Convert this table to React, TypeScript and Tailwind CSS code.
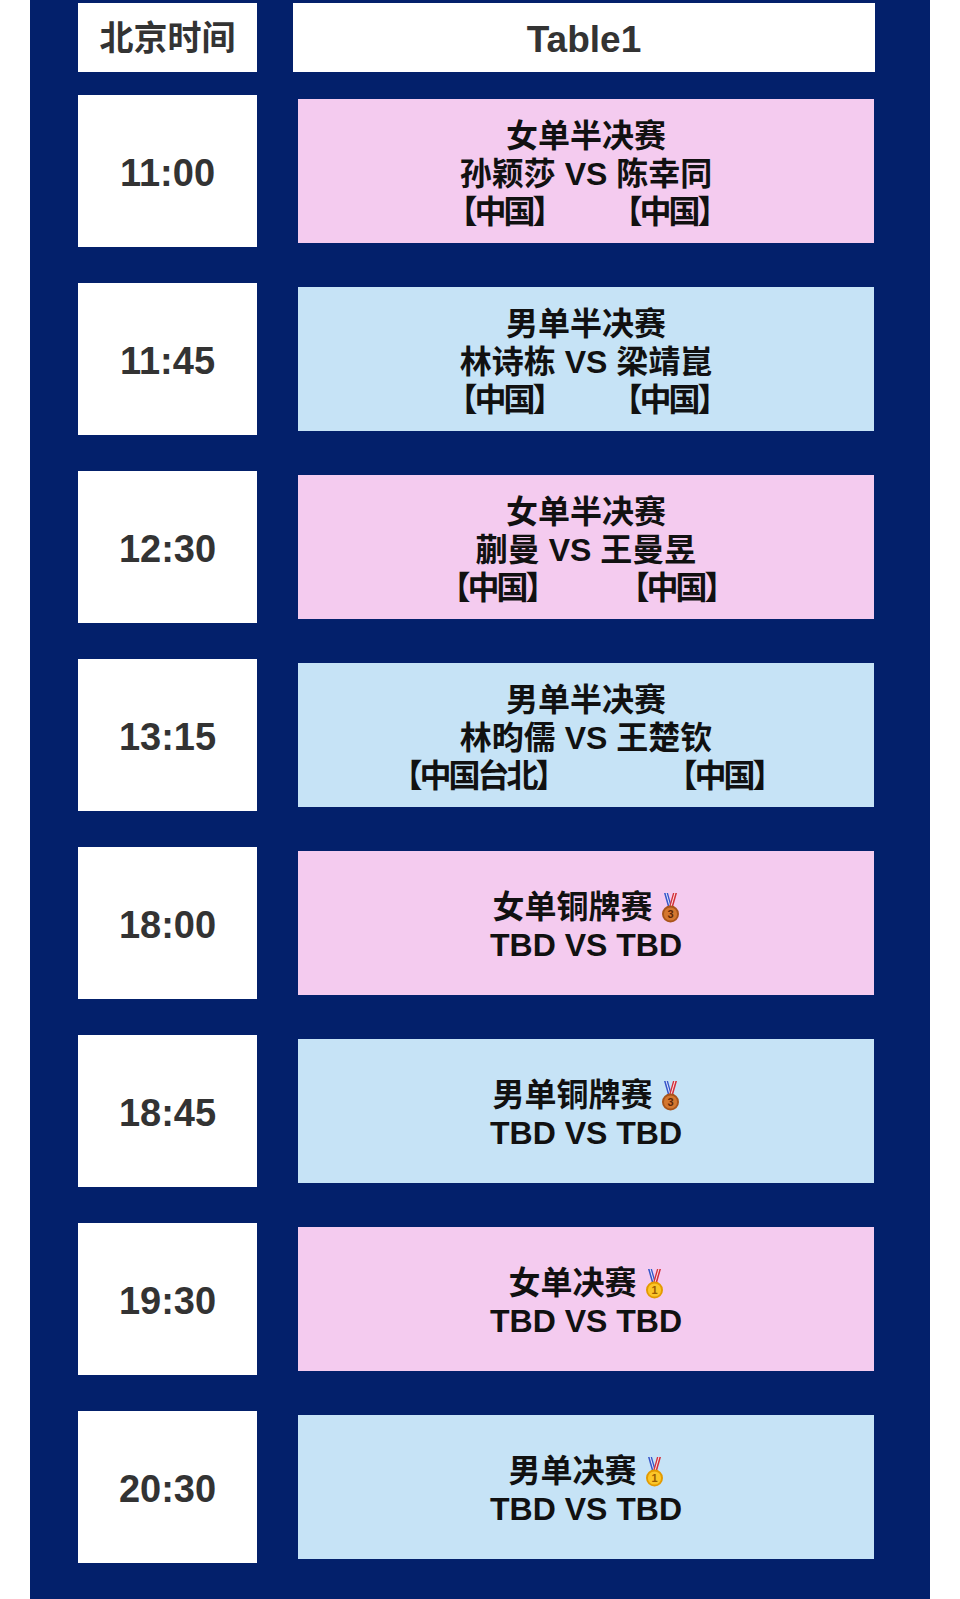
import React from "react";

type Row = {
  time: string;
  tone: "pink" | "blue";
  title: string;
  match: string;
  countries?: [string, string];
  gapClass?: string;
  medal?: "bronze" | "gold";
};

const rows: Row[] = [
  { time: "11:00", tone: "pink", title: "女单半决赛", match: "孙颖莎 VS 陈幸同", countries: ["【中国】", "【中国】"], gapClass: "gap-[49px]" },
  { time: "11:45", tone: "blue", title: "男单半决赛", match: "林诗栋 VS 梁靖崑", countries: ["【中国】", "【中国】"], gapClass: "gap-[49px]" },
  { time: "12:30", tone: "pink", title: "女单半决赛", match: "蒯曼 VS 王曼昱", countries: ["【中国】", "【中国】"], gapClass: "gap-[63px]" },
  { time: "13:15", tone: "blue", title: "男单半决赛", match: "林昀儒 VS 王楚钦", countries: ["【中国台北】", "【中国】"], gapClass: "gap-[101px]" },
  { time: "18:00", tone: "pink", title: "女单铜牌赛", match: "TBD VS TBD", medal: "bronze" },
  { time: "18:45", tone: "blue", title: "男单铜牌赛", match: "TBD VS TBD", medal: "bronze" },
  { time: "19:30", tone: "pink", title: "女单决赛", match: "TBD VS TBD", medal: "gold" },
  { time: "20:30", tone: "blue", title: "男单决赛", match: "TBD VS TBD", medal: "gold" },
];

function Medal({ kind }: { kind: "bronze" | "gold" }) {
  const outer = kind === "gold" ? "#e39a00" : "#a8541a";
  const inner = kind === "gold" ? "#fbc628" : "#d4772f";
  const label = kind === "gold" ? "1" : "3";
  return (
    <svg width="19" height="30" viewBox="0 0 19 30" className="inline-block align-middle ml-[8px] -mt-[3px]">
      <polygon points="3,0 7,0 11,14 7,14" fill="#3656c8" />
      <polygon points="4.6,0 5.6,0 9.6,14 8.6,14" fill="#e8ecff" />
      <polygon points="12,0 16,0 12,14 8,14" fill="#d32f3a" />
      <polygon points="13.4,0 14.4,0 10.4,14 9.4,14" fill="#ffe8e8" />
      <circle cx="9.5" cy="21" r="8.5" fill={outer} />
      <circle cx="9.5" cy="21" r="6.6" fill={inner} />
      <text
        x="9.5"
        y="25"
        textAnchor="middle"
        fontSize="11"
        fontWeight="bold"
        fontFamily="Liberation Sans, sans-serif"
        fill={kind === "gold" ? "#9a5c00" : "#5e2606"}
      >
        {label}
      </text>
    </svg>
  );
}

export default function App() {
  return (
    <div className="w-[960px] min-h-[1599px] bg-white font-['Liberation_Sans','Noto_Sans_CJK_SC',sans-serif]">
      <div className="ml-[30px] w-[900px] bg-[#03206b] pt-[3px] pb-[36px]">
        {/* Header */}
        <div className="flex">
          <div className="ml-[48px] w-[179px] h-[69px] bg-white flex items-center justify-center">
            <span className="text-[34px] font-semibold text-[#333333] leading-none">北京时间</span>
          </div>
          <div className="ml-[36px] w-[582px] h-[69px] bg-white flex items-center justify-center pt-[3px]">
            <span className="text-[37px] font-bold text-[#333333] leading-none">Table1</span>
          </div>
        </div>

        {/* Rows */}
        <div className="mt-[23px] flex flex-col gap-[36px]">
          {rows.map((r) => (
            <div key={r.time} className="flex items-center h-[152px]">
              <div className="ml-[48px] w-[179px] h-[152px] bg-white flex items-center justify-center pt-[4px]">
                <span className="text-[38px] font-bold text-[#333333] leading-none">{r.time}</span>
              </div>
              <div
                className={
                  "ml-[41px] w-[576px] h-[144px] pt-[6px] flex flex-col items-center justify-center text-[32px] font-bold text-[#111111] leading-[38px] " +
                  (r.tone === "pink" ? "bg-[#f4cbef]" : "bg-[#c6e3f6]")
                }
              >
                <div className="whitespace-nowrap">
                  {r.title}
                  {r.medal && <Medal kind={r.medal} />}
                </div>
                <div className="whitespace-pre">{r.match}</div>
                {r.countries && (
                  <div className={"flex tracking-[-3px] " + (r.gapClass ?? "")}>
                    <span>{r.countries[0]}</span>
                    <span>{r.countries[1]}</span>
                  </div>
                )}
              </div>
            </div>
          ))}
        </div>
      </div>
    </div>
  );
}
